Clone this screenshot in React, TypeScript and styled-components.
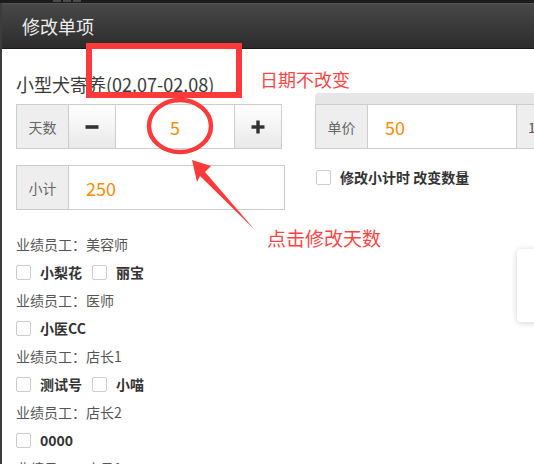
import React from "react";
import styled, { createGlobalStyle } from "styled-components";

const Global = createGlobalStyle`
  html, body { margin: 0; padding: 0; background: #3a3a3a; }
  body { font-family: "Noto Sans CJK SC", "Noto Sans", sans-serif; }
  * { box-sizing: border-box; }
`;

const Page = styled.div`
  position: relative;
  width: 534px;
  height: 464px;
  overflow: hidden;
  background: #3c3c3c;
`;

const TopStrip = styled.div`
  height: 3px;
  background: #1b1b1b;
  display: flex;
  gap: 2px;
  padding-left: 53px;
`;

const Tile = styled.div`
  width: 8px;
  height: 2px;
  background: #4a4a4a;
`;

const Dialog = styled.div`
  margin-left: 2px;
  height: 461px;
  background: #fff;
  display: flex;
  flex-direction: column;
  overflow: hidden;
`;

const Header = styled.div`
  height: 46px;
  flex: none;
  display: flex;
  align-items: center;
  padding-left: 20px;
  background: linear-gradient(#484848, #2c2c2c);
  border-top: 1px solid #555;
  border-bottom: 1px solid #1a1a1a;
  color: #eee;
  font-size: 18px;
`;

const Body = styled.div`
  display: grid;
  grid-template-columns: 269px 300px;
  column-gap: 30px;
  padding-left: 14px;
`;

const LeftCol = styled.div`
  padding-top: 23px;
  display: flex;
  flex-direction: column;
`;

const RightCol = styled.div`
  padding-top: 44px;
  display: flex;
  flex-direction: column;
`;

const ItemTitle = styled.div`
  font-size: 18px;
  line-height: 24px;
  color: #3a3a3a;
  margin-bottom: 8px;
  white-space: nowrap;
`;

const InputGroup = styled.div<{ $mt?: number }>`
  display: flex;
  height: 45px;
  margin-top: ${(p) => p.$mt ?? 0}px;
`;

const Addon = styled.div<{ $w: number }>`
  flex: none;
  width: ${(p) => p.$w}px;
  background: #eee;
  border: 1px solid #ccc;
  display: flex;
  align-items: center;
  justify-content: center;
  font-size: 14px;
  color: #666;
`;

const StepButton = styled.div`
  flex: none;
  width: 48px;
  border: 1px solid #ccc;
  background: linear-gradient(#ffffff, #e9e9e9);
  display: flex;
  align-items: center;
  justify-content: center;
  margin-left: -1px;
`;

const Field = styled.div<{ $w: number; $center?: boolean }>`
  flex: none;
  width: ${(p) => p.$w}px;
  border: 1px solid #ccc;
  margin-left: -1px;
  background: #fff;
  display: flex;
  align-items: center;
  justify-content: ${(p) => (p.$center ? "center" : "flex-start")};
  padding-left: ${(p) => (p.$center ? 0 : 17)}px;
  font-size: 18px;
  color: #ff8a00;
`;

const TrailAddon = styled(Addon)`
  margin-left: 0;
  border-left: none;
  justify-content: flex-start;
  padding-left: 11px;
  color: #555;
`;

const GrayBar = styled.div`
  height: 11px;
  background: #e6e6e6;
  border-top-left-radius: 4px;
`;

const CheckRow = styled.div<{ $mt?: number }>`
  display: flex;
  align-items: center;
  height: 28px;
  margin-top: ${(p) => p.$mt ?? 0}px;
`;

const Box = styled.span<{ $ml?: number }>`
  flex: none;
  width: 15px;
  height: 15px;
  border: 1px solid #ccc;
  border-radius: 2px;
  background: #fff;
  margin-right: 9px;
  margin-left: ${(p) => p.$ml ?? 0}px;
`;

const CheckLabel = styled.span`
  font-size: 14px;
  font-weight: 700;
  color: #333;
  margin-right: 10px;
  white-space: nowrap;
`;

const StaffList = styled.div`
  margin-top: 20px;
  display: flex;
  flex-direction: column;
`;

const StaffTitle = styled.div`
  height: 28px;
  line-height: 28px;
  font-size: 14px;
  color: #555;
  white-space: nowrap;
`;

const SideCard = styled.div`
  position: absolute;
  left: 517px;
  top: 249px;
  width: 40px;
  height: 73px;
  background: #fff;
  border-radius: 4px;
  box-shadow: 0 1px 6px rgba(0, 0, 0, 0.18);
`;

const RedFrame = styled.div`
  position: absolute;
  left: 86px;
  top: 43px;
  width: 156px;
  height: 55px;
  border: 6px solid #fc3a3a;
`;

const Note = styled.div<{ $x: number; $y: number; $size: number }>`
  position: absolute;
  left: ${(p) => p.$x}px;
  top: ${(p) => p.$y}px;
  font-size: ${(p) => p.$size}px;
  line-height: 1;
  color: #ff4444;
  white-space: nowrap;
`;

const Overlay = styled.svg`
  position: absolute;
  left: 0;
  top: 0;
  pointer-events: none;
`;

const MinusIcon = () => (
  <svg width="14" height="14" viewBox="0 0 14 14">
    <rect x="0.5" y="5.2" width="13" height="3.6" fill="#333" />
  </svg>
);

const PlusIcon = () => (
  <svg width="14" height="14" viewBox="0 0 14 14">
    <rect x="0.5" y="5.3" width="13" height="3.4" fill="#333" />
    <rect x="5.3" y="0.5" width="3.4" height="13" fill="#333" />
  </svg>
);

const staff = [
  { role: "美容师", people: ["小梨花", "丽宝"] },
  { role: "医师", people: ["小医CC"] },
  { role: "店长1", people: ["测试号", "小喵"] },
  { role: "店长2", people: ["0000"] },
  { role: "店员1", people: [] as string[] },
];

export default function App() {
  return (
    <Page>
      <Global />
      <TopStrip>
        <Tile />
        <Tile />
        <Tile />
      </TopStrip>
      <Dialog>
        <Header>修改单项</Header>
        <Body>
          <LeftCol>
            <ItemTitle>小型犬寄养(02.07-02.08)</ItemTitle>
            <InputGroup>
              <Addon $w={53}>天数</Addon>
              <StepButton>
                <MinusIcon />
              </StepButton>
              <Field $w={120} $center>
                5
              </Field>
              <StepButton>
                <PlusIcon />
              </StepButton>
            </InputGroup>
            <InputGroup $mt={16}>
              <Addon $w={53}>小计</Addon>
              <Field $w={217}>250</Field>
            </InputGroup>
            <StaffList>
              {staff.map((s) => (
                <React.Fragment key={s.role}>
                  <StaffTitle>业绩员工：{s.role}</StaffTitle>
                  {s.people.length > 0 && (
                    <CheckRow>
                      {s.people.map((p) => (
                        <React.Fragment key={p}>
                          <Box />
                          <CheckLabel>{p}</CheckLabel>
                        </React.Fragment>
                      ))}
                    </CheckRow>
                  )}
                </React.Fragment>
              ))}
            </StaffList>
          </LeftCol>
          <RightCol>
            <GrayBar />
            <InputGroup>
              <Addon $w={53}>单价</Addon>
              <Field $w={150}>50</Field>
              <TrailAddon $w={60}>1</TrailAddon>
            </InputGroup>
            <CheckRow $mt={14}>
              <Box $ml={1} />
              <CheckLabel>修改小计时 改变数量</CheckLabel>
            </CheckRow>
          </RightCol>
        </Body>
      </Dialog>
      <SideCard />
      <RedFrame />
      <Note $x={260} $y={70} $size={18}>
        日期不改变
      </Note>
      <Note $x={267} $y={228} $size={19}>
        点击修改天数
      </Note>
      <Overlay width={534} height={464} viewBox="0 0 534 464">
        <ellipse cx="180" cy="126" rx="31" ry="26" fill="none" stroke="#fc3a3a" strokeWidth="4.5" />
        <polygon
          points="192,160 211,166 205,172 255,230 200,176 197,182"
          fill="#fc3a3a"
        />
      </Overlay>
    </Page>
  );
}
